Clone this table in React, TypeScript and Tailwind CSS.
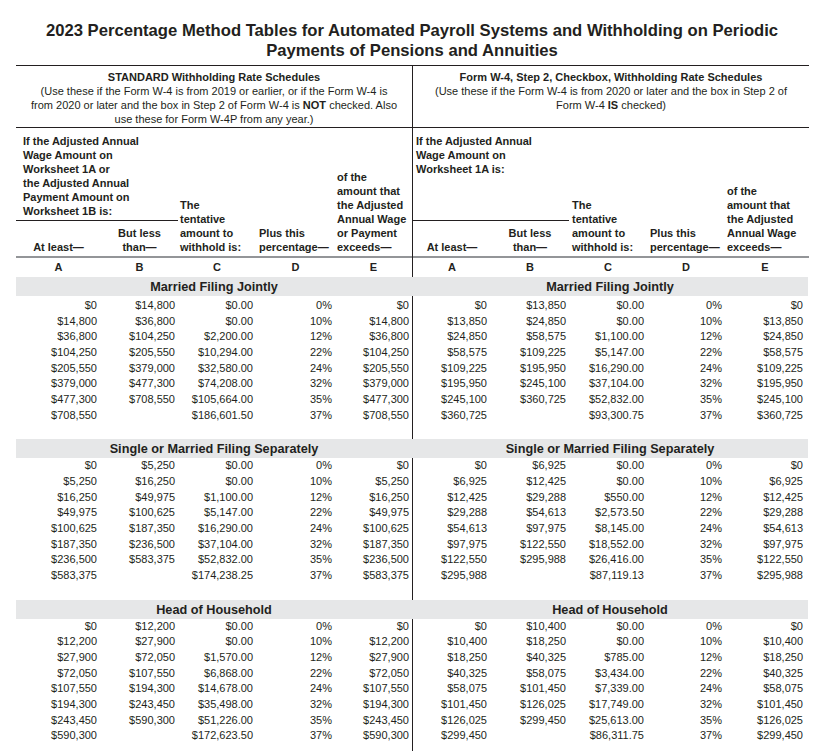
type Row = [string, string, string, string, string];
type Schedule = { title: string; rows: Row[] };

const standard: Schedule[] = [
  {
    title: "Married Filing Jointly",
    rows: [
      ["$0", "$14,800", "$0.00", "0%", "$0"],
      ["$14,800", "$36,800", "$0.00", "10%", "$14,800"],
      ["$36,800", "$104,250", "$2,200.00", "12%", "$36,800"],
      ["$104,250", "$205,550", "$10,294.00", "22%", "$104,250"],
      ["$205,550", "$379,000", "$32,580.00", "24%", "$205,550"],
      ["$379,000", "$477,300", "$74,208.00", "32%", "$379,000"],
      ["$477,300", "$708,550", "$105,664.00", "35%", "$477,300"],
      ["$708,550", "", "$186,601.50", "37%", "$708,550"],
    ],
  },
  {
    title: "Single or Married Filing Separately",
    rows: [
      ["$0", "$5,250", "$0.00", "0%", "$0"],
      ["$5,250", "$16,250", "$0.00", "10%", "$5,250"],
      ["$16,250", "$49,975", "$1,100.00", "12%", "$16,250"],
      ["$49,975", "$100,625", "$5,147.00", "22%", "$49,975"],
      ["$100,625", "$187,350", "$16,290.00", "24%", "$100,625"],
      ["$187,350", "$236,500", "$37,104.00", "32%", "$187,350"],
      ["$236,500", "$583,375", "$52,832.00", "35%", "$236,500"],
      ["$583,375", "", "$174,238.25", "37%", "$583,375"],
    ],
  },
  {
    title: "Head of Household",
    rows: [
      ["$0", "$12,200", "$0.00", "0%", "$0"],
      ["$12,200", "$27,900", "$0.00", "10%", "$12,200"],
      ["$27,900", "$72,050", "$1,570.00", "12%", "$27,900"],
      ["$72,050", "$107,550", "$6,868.00", "22%", "$72,050"],
      ["$107,550", "$194,300", "$14,678.00", "24%", "$107,550"],
      ["$194,300", "$243,450", "$35,498.00", "32%", "$194,300"],
      ["$243,450", "$590,300", "$51,226.00", "35%", "$243,450"],
      ["$590,300", "", "$172,623.50", "37%", "$590,300"],
    ],
  },
];

const checkbox: Schedule[] = [
  {
    title: "Married Filing Jointly",
    rows: [
      ["$0", "$13,850", "$0.00", "0%", "$0"],
      ["$13,850", "$24,850", "$0.00", "10%", "$13,850"],
      ["$24,850", "$58,575", "$1,100.00", "12%", "$24,850"],
      ["$58,575", "$109,225", "$5,147.00", "22%", "$58,575"],
      ["$109,225", "$195,950", "$16,290.00", "24%", "$109,225"],
      ["$195,950", "$245,100", "$37,104.00", "32%", "$195,950"],
      ["$245,100", "$360,725", "$52,832.00", "35%", "$245,100"],
      ["$360,725", "", "$93,300.75", "37%", "$360,725"],
    ],
  },
  {
    title: "Single or Married Filing Separately",
    rows: [
      ["$0", "$6,925", "$0.00", "0%", "$0"],
      ["$6,925", "$12,425", "$0.00", "10%", "$6,925"],
      ["$12,425", "$29,288", "$550.00", "12%", "$12,425"],
      ["$29,288", "$54,613", "$2,573.50", "22%", "$29,288"],
      ["$54,613", "$97,975", "$8,145.00", "24%", "$54,613"],
      ["$97,975", "$122,550", "$18,552.00", "32%", "$97,975"],
      ["$122,550", "$295,988", "$26,416.00", "35%", "$122,550"],
      ["$295,988", "", "$87,119.13", "37%", "$295,988"],
    ],
  },
  {
    title: "Head of Household",
    rows: [
      ["$0", "$10,400", "$0.00", "0%", "$0"],
      ["$10,400", "$18,250", "$0.00", "10%", "$10,400"],
      ["$18,250", "$40,325", "$785.00", "12%", "$18,250"],
      ["$40,325", "$58,075", "$3,434.00", "22%", "$40,325"],
      ["$58,075", "$101,450", "$7,339.00", "24%", "$58,075"],
      ["$101,450", "$126,025", "$17,749.00", "32%", "$101,450"],
      ["$126,025", "$299,450", "$25,613.00", "35%", "$126,025"],
      ["$299,450", "", "$86,311.75", "37%", "$299,450"],
    ],
  },
];

const LEFT_GRID = "grid grid-cols-[85px_77px_78px_79px_77px]";
const RIGHT_GRID = "grid grid-cols-[78px_78px_78px_78px_84px]";
const LEFT_PAD = ["pr-[4px]", "pr-[3px]", "pr-[3px]", "pr-[3px]", "pr-[3px]"];
const RIGHT_PAD = ["pr-[4px]", "pr-[3px]", "pr-[3px]", "pr-[3px]", "pr-[6px]"];

function Schedules({ data, right }: { data: Schedule[]; right?: boolean }) {
  const grid = right ? RIGHT_GRID : LEFT_GRID;
  const pad = right ? RIGHT_PAD : LEFT_PAD;
  return (
    <div>
      {data.map((s, i) => (
        <div key={s.title} className={i === 0 ? "" : "mt-[16px]"}>
          <div
            className={
              "h-[19px] bg-[#e6e7e8] pt-[1px] text-center text-[12.7px] font-bold leading-[19px] " +
              (right ? "-ml-px mr-px" : "")
            }
          >
            {s.title}
          </div>
          <div className={i === 0 ? "pt-[2px]" : ""}>
            {s.rows.map((r, j) => (
              <div key={j} className={grid + " text-[11px] leading-[15.67px]"}>
                {r.map((c, k) => (
                  <div key={k} className={"text-right " + pad[k]}>
                    {c}
                  </div>
                ))}
              </div>
            ))}
          </div>
        </div>
      ))}
    </div>
  );
}

function Letters({ right }: { right?: boolean }) {
  return (
    <div className={(right ? RIGHT_GRID : LEFT_GRID) + " h-[19px] text-[11px] font-bold leading-[19px]"}>
      <div className="text-center">A</div>
      <div className="text-center">B</div>
      <div className="text-center">C</div>
      <div className="text-center">D</div>
      <div className={"text-center " + (right ? "pr-[4px]" : "")}>E</div>
    </div>
  );
}

export default function App() {
  return (
    <div className="min-h-[751px] w-[824px] bg-white font-['Liberation_Sans',Arial,sans-serif] text-[#231f20]">
      <h1 className="pt-[21px] text-center text-[16.65px] font-bold leading-[20px]">
        2023 Percentage Method Tables for Automated Payroll Systems and Withholding on Periodic
        <br />
        Payments of Pensions and Annuities
      </h1>

      <div className="ml-[16px] mt-[4px] flex h-[686px] w-[793px] border-t border-[#231f20]">
        {/* STANDARD */}
        <div className="w-[396px]">
          <div className="h-[62px] border-b border-[#231f20] pt-[4px] text-center text-[11px] leading-[14px]">
            <div className="font-bold">STANDARD Withholding Rate Schedules</div>
            (Use these if the Form W-4 is from 2019 or earlier, or if the Form W-4 is
            <br />
            from 2020 or later and the box in Step 2 of Form W-4 is <b>NOT</b> checked. Also
            <br />
            use these for Form W-4P from any year.)
          </div>

          <div className="flex h-[130px] items-end border-b-2 border-[#939598] pb-[2px] text-[11px] font-bold leading-[14px] whitespace-nowrap">
            <div className="flex w-[162px] flex-col">
              <div className="h-[87px] border-b border-[#231f20] pl-[7px]">
                If the Adjusted Annual
                <br />
                Wage Amount on
                <br />
                Worksheet 1A or
                <br />
                the Adjusted Annual
                <br />
                Payment Amount on
                <br />
                Worksheet 1B is:
              </div>
              <div className="mt-[5px] flex h-[28px] items-end">
                <div className="w-[85px] text-center">At least—</div>
                <div className="w-[77px] text-center">
                  But less
                  <br />
                  than—
                </div>
              </div>
            </div>
            <div className="w-[78px] pl-[2px]">
              The
              <br />
              tentative
              <br />
              amount to
              <br />
              withhold is:
            </div>
            <div className="w-[79px] pl-[3px]">
              Plus this
              <br />
              percentage—
            </div>
            <div className="w-[77px] pl-[2px]">
              of the
              <br />
              amount that
              <br />
              the Adjusted
              <br />
              Annual Wage
              <br />
              or Payment
              <br />
              exceeds—
            </div>
          </div>

          <Letters />
          <Schedules data={standard} />
        </div>

        {/* Step 2 checkbox */}
        <div className="w-[397px] border-l border-[#231f20]">
          <div className="h-[62px] border-b border-[#231f20] pt-[4px] text-center text-[11px] leading-[14px]">
            <div className="font-bold">Form W-4, Step 2, Checkbox, Withholding Rate Schedules</div>
            (Use these if the Form W-4 is from 2020 or later and the box in Step 2 of
            <br />
            Form W-4 <b>IS</b> checked)
          </div>

          <div className="flex h-[130px] items-end border-b-2 border-[#939598] pb-[2px] text-[11px] font-bold leading-[14px] whitespace-nowrap">
            <div className="flex w-[156px] flex-col">
              <div className="h-[87px] border-b border-[#231f20] pl-[3px]">
                If the Adjusted Annual
                <br />
                Wage Amount on
                <br />
                Worksheet 1A is:
              </div>
              <div className="mt-[5px] flex h-[28px] items-end">
                <div className="w-[78px] text-center">At least—</div>
                <div className="w-[78px] text-center">
                  But less
                  <br />
                  than—
                </div>
              </div>
            </div>
            <div className="w-[78px] pl-[3px]">
              The
              <br />
              tentative
              <br />
              amount to
              <br />
              withhold is:
            </div>
            <div className="w-[78px] pl-[3px]">
              Plus this
              <br />
              percentage—
            </div>
            <div className="w-[84px] pl-[2px]">
              of the
              <br />
              amount that
              <br />
              the Adjusted
              <br />
              Annual Wage
              <br />
              exceeds—
            </div>
          </div>

          <Letters right />
          <Schedules data={checkbox} right />
        </div>
      </div>
    </div>
  );
}
